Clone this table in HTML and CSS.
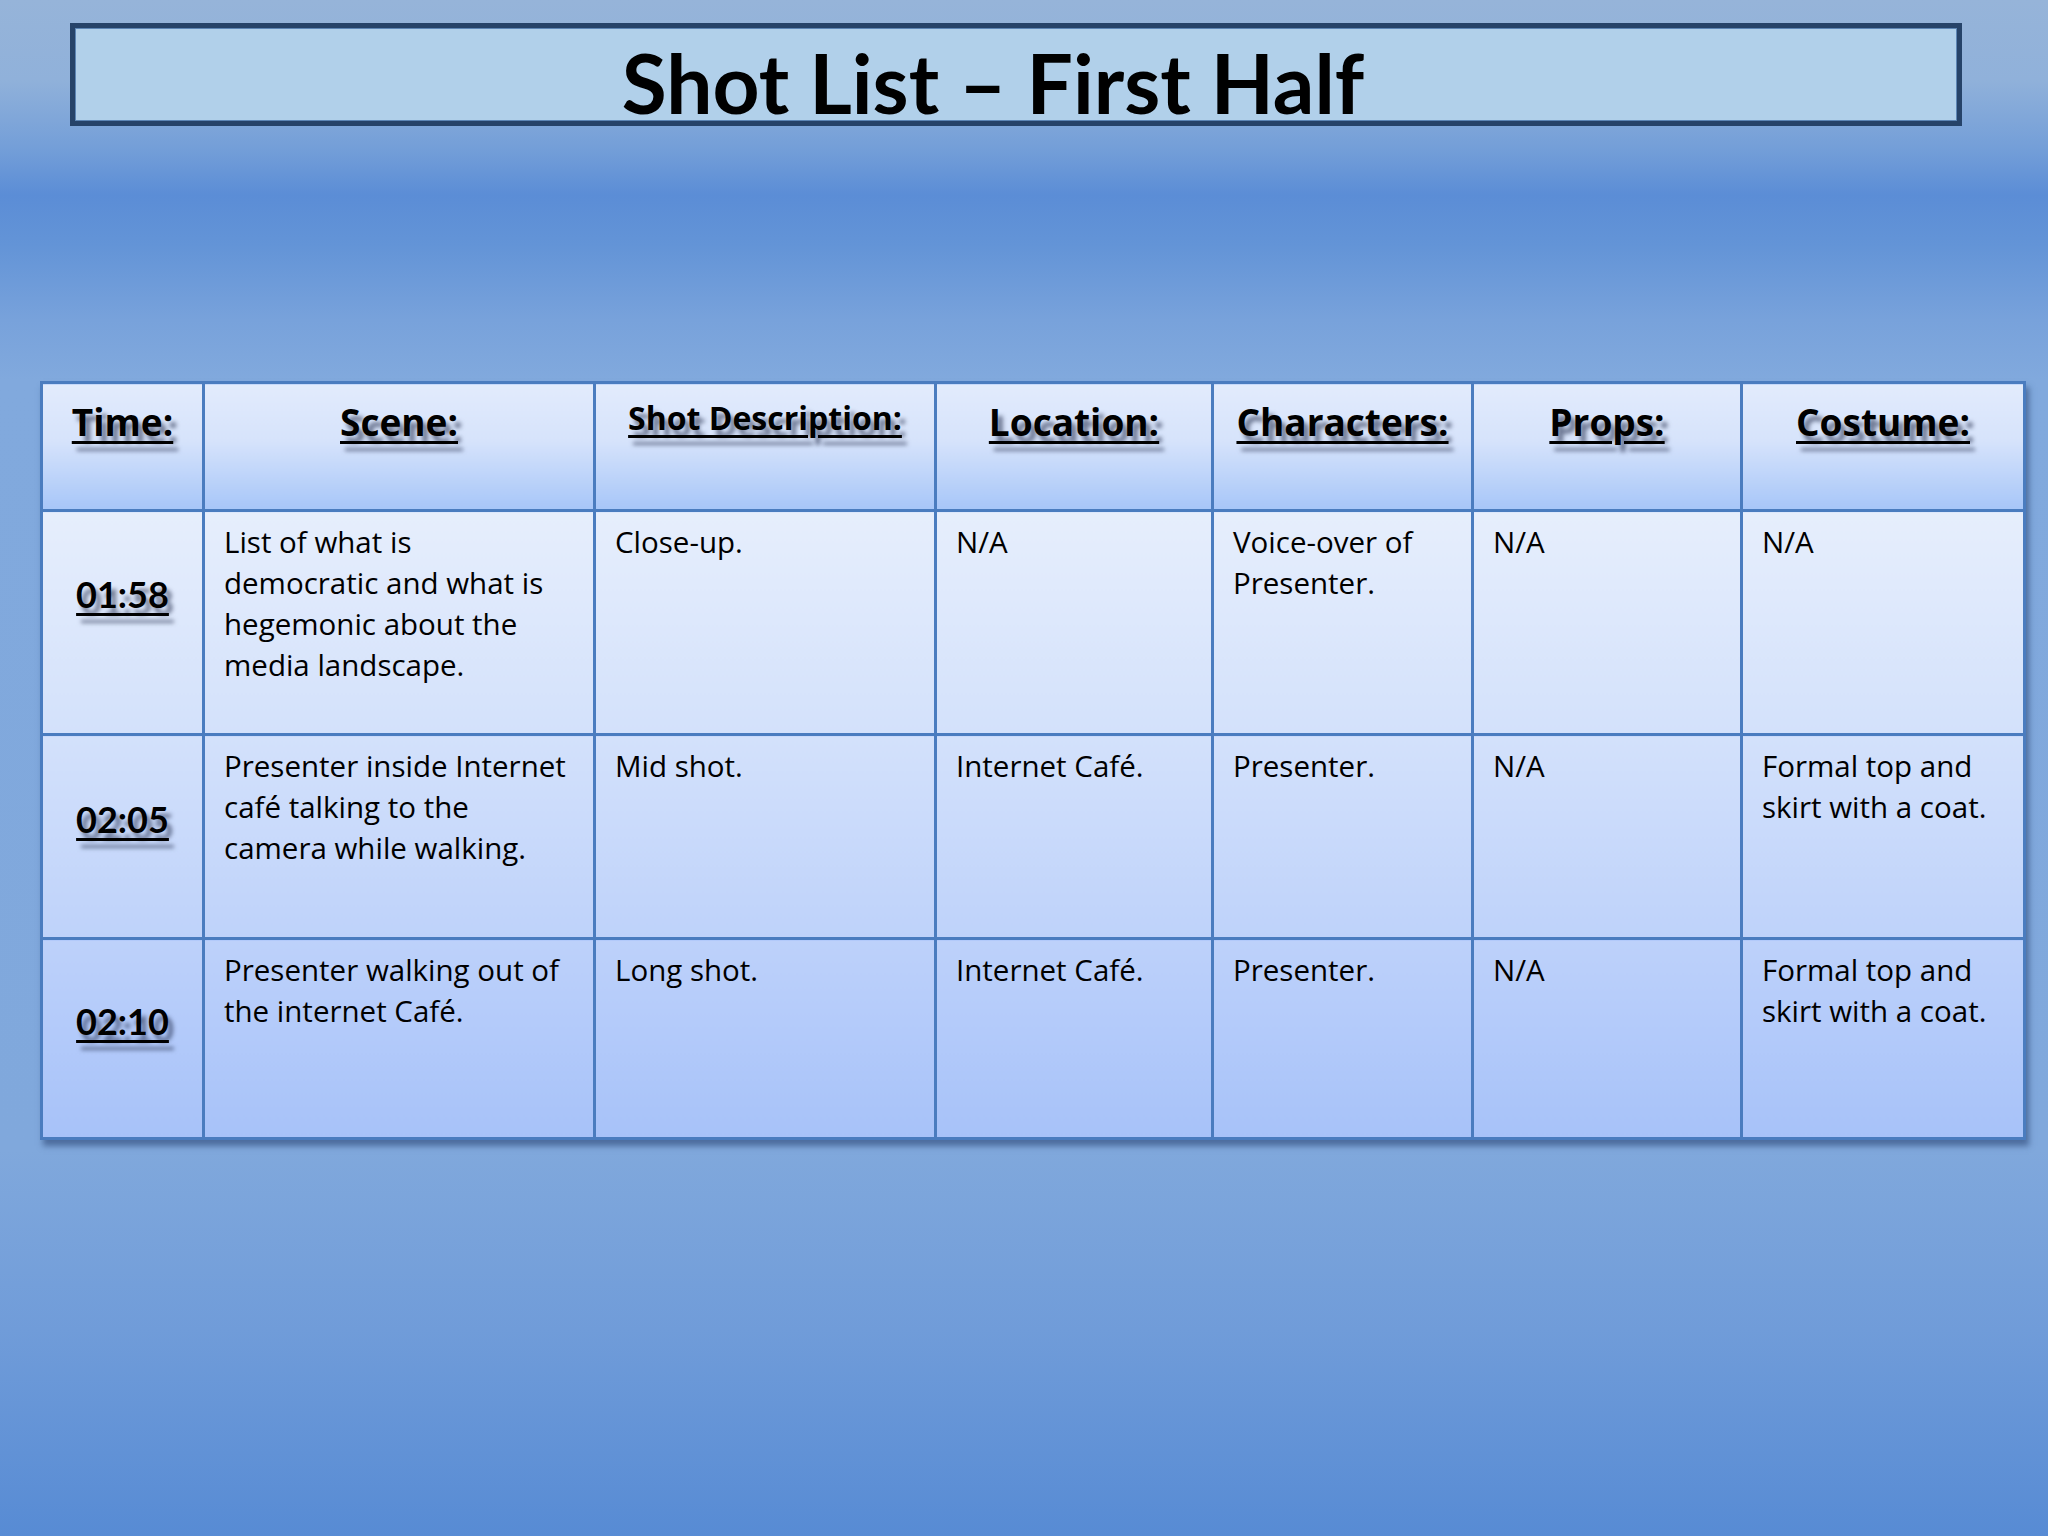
FILE: index.html
```html
<!DOCTYPE html>
<html lang="en">
<head>
<meta charset="utf-8">
<title>Shot List – First Half</title>
<link rel="stylesheet" href="styles.css">
</head>
<body>
<div class="slide">
  <header class="title-box">
    <h1 class="title">Shot List – First Half</h1>
  </header>

  <table class="shots">
    <colgroup>
      <col class="c-time">
      <col class="c-scene">
      <col class="c-desc">
      <col class="c-loc">
      <col class="c-char">
      <col class="c-props">
      <col class="c-cost">
    </colgroup>
    <thead>
      <tr class="head-row">
        <th><span class="hd">Time:</span></th>
        <th><span class="hd">Scene:</span></th>
        <th><span class="hd hd-small">Shot Description:</span></th>
        <th><span class="hd">Location:</span></th>
        <th><span class="hd">Characters:</span></th>
        <th><span class="hd">Props:</span></th>
        <th><span class="hd">Costume:</span></th>
      </tr>
    </thead>
    <tbody>
      <tr class="row row-1">
        <td class="time"><span class="tm">01:58</span></td>
        <td>List of what is democratic and what is hegemonic about the media landscape.</td>
        <td>Close-up.</td>
        <td>N/A</td>
        <td>Voice-over of Presenter.</td>
        <td>N/A</td>
        <td>N/A</td>
      </tr>
      <tr class="row row-2">
        <td class="time"><span class="tm">02:05</span></td>
        <td>Presenter inside Internet café talking to the camera while walking.</td>
        <td>Mid shot.</td>
        <td>Internet Café.</td>
        <td>Presenter.</td>
        <td>N/A</td>
        <td>Formal top and skirt with a coat.</td>
      </tr>
      <tr class="row row-3">
        <td class="time"><span class="tm">02:10</span></td>
        <td>Presenter walking out of the internet Café.</td>
        <td>Long shot.</td>
        <td>Internet Café.</td>
        <td>Presenter.</td>
        <td>N/A</td>
        <td>Formal top and skirt with a coat.</td>
      </tr>
    </tbody>
  </table>
</div>
</body>
</html>
```

FILE: styles.css
```css
html, body {
  margin: 0;
  padding: 0;
}

body {
  width: 2048px;
  height: 1536px;
  overflow: hidden;
  font-family: "Open Sans", Lato, "Liberation Sans", sans-serif;
  color: #000;
  background: linear-gradient(to bottom,
    #96b4d9 0px,
    #90b1da 80px,
    #739ed8 150px,
    #5b8dd6 195px,
    #6394d7 245px,
    #78a2db 320px,
    #81a9dd 380px,
    #80a8dc 1150px,
    #709cd9 1330px,
    #578bd4 1536px);
}

.slide {
  display: flex;
  flex-direction: column;
  align-items: flex-start;
  padding-top: 23px;
}

/* ---------- title ---------- */
.title-box {
  box-sizing: border-box;
  margin-left: 70px;
  width: 1892px;
  height: 103px;
  border: 5px solid #264369;
  box-shadow: inset 0 0 0 1px #5c85b5;
  background: #b1d0ea;
  padding: 13px 46px 0 0;
  text-align: center;
}

.title {
  margin: 0;
  font-family: Lato, "Open Sans", sans-serif;
  font-size: 82px;
  line-height: 82px;
  font-weight: 700;
  white-space: nowrap;
}

/* ---------- table ---------- */
.shots {
  margin-top: 255px;
  margin-left: 40px;
  width: 1983px;
  table-layout: fixed;
  border-collapse: collapse;
  border: 3px solid #4a7cbf;
  box-shadow: 3px 6px 6px rgba(35, 60, 105, 0.55);
}

.c-time  { width: 162px; }
.c-scene { width: 391px; }
.c-desc  { width: 341px; }
.c-loc   { width: 277px; }
.c-char  { width: 260px; }
.c-props { width: 269px; }
.c-cost  { width: 283px; }

.shots th,
.shots td {
  border: 3px solid #4a7cbf;
  padding: 0;
}

.head-row { height: 128px; }

.head-row th {
  vertical-align: top;
  text-align: center;
  padding-top: 16px;
  background: linear-gradient(to bottom, #e2ebfc 0%, #d6e3fb 45%, #a7c6f8 100%);
  font-weight: 700;
}

.hd,
.tm {
  font-weight: 700;
  text-decoration: underline;
  text-decoration-thickness: 3px;
  text-underline-offset: 5px;
  text-shadow: 5px 7px 4px rgba(20, 30, 60, 0.55);
}

.hd {
  font-family: "Open Sans", Lato, sans-serif;
  font-size: 37px;
  line-height: 44px;
}

.hd-small {
  font-size: 32px;
  line-height: 36px;
}

.tm {
  font-family: Lato, "Open Sans", sans-serif;
  font-size: 36px;
  line-height: 44px;
}

.row td {
  vertical-align: top;
  text-align: left;
  font-size: 29.5px;
  line-height: 41px;
  padding: 9px 21px 0 19px;
}

.row td.time {
  vertical-align: middle;
  text-align: center;
  padding: 0 0 34px 0;
}

.row-1 td.time { padding-bottom: 56px; }

.row-1 { height: 224px; }
.row-2 { height: 204px; }
.row-3 { height: 200px; }

.row-1 td { background: linear-gradient(to bottom, #e6eefc, #d3e1fb); }
.row-2 td { background: linear-gradient(to bottom, #d3e1fb, #bed2fa); }
.row-3 td { background: linear-gradient(to bottom, #bdd1fa, #a7c2f9); }
```
